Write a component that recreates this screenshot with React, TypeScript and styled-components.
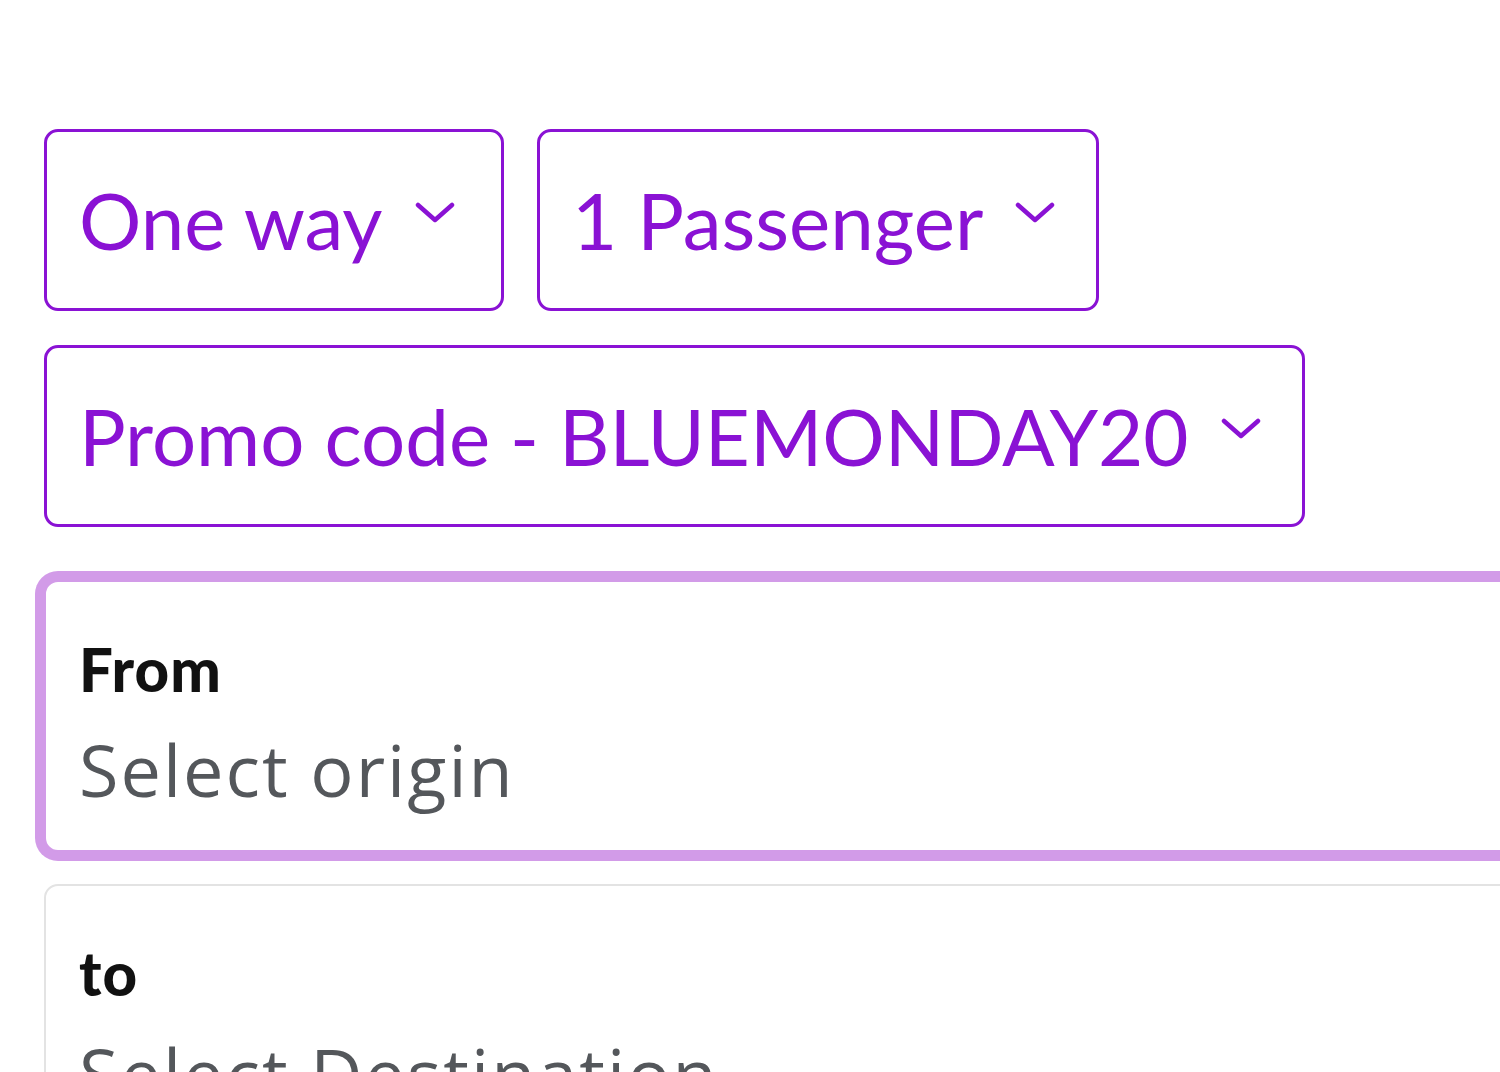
import React from "react";
import styled, { createGlobalStyle } from "styled-components";

const GlobalStyle = createGlobalStyle`
  html, body {
    margin: 0;
    padding: 0;
    background: #ffffff;
    overflow: hidden;
  }
  body {
    font-family: Lato, "Noto Sans", sans-serif;
  }
`;

const PURPLE = "#8a12d4";

const Page = styled.div`
  display: flex;
  flex-direction: column;
  padding: 129px 0 0 44px;
  width: 1700px;
`;

const Row = styled.div`
  display: flex;
  gap: 33px;
  margin-bottom: 34px;
`;

const SelectButton = styled.button<{ $minWidth?: number }>`
  display: flex;
  align-items: center;
  gap: 32px;
  height: 182px;
  min-width: ${(p) => (p.$minWidth ? `${p.$minWidth}px` : "auto")};
  box-sizing: border-box;
  padding: 0 41px 0 32px;
  background: #ffffff;
  border: 3px solid ${PURPLE};
  border-radius: 14px;
  color: ${PURPLE};
  font-family: Lato, "Noto Sans", sans-serif;
  font-size: 78px;
  font-weight: 400;
  line-height: 1;
  cursor: pointer;
`;

const Chevron = styled.svg`
  width: 40px;
  height: 22px;
  flex: none;
  margin-top: -14px;
`;

const FieldCard = styled.div<{ $focused?: boolean }>`
  box-sizing: border-box;
  width: 1600px;
  height: 272px;
  padding: 51px 0 0 33px;
  border: 2px solid ${(p) => (p.$focused ? "#d29be8" : "#e3e3e3")};
  border-radius: 14px;
  box-shadow: ${(p) => (p.$focused ? "0 0 0 9px #d29be8" : "none")};
  background: #ffffff;
  margin-top: ${(p) => (p.$focused ? "19px" : "32px")};
`;

const Label = styled.div`
  font-family: Lato, "Noto Sans", sans-serif;
  font-weight: 900;
  font-size: 60px;
  letter-spacing: 1px;
  line-height: 1.2;
  color: #111111;
`;

const Placeholder = styled.div`
  font-family: "Open Sans", Lato, sans-serif;
  font-weight: 400;
  font-size: 72px;
  letter-spacing: 2px;
  line-height: 1.2;
  color: #54575b;
  margin-top: 21px;
`;

const ChevronIcon = () => (
  <Chevron viewBox="0 0 40 22" fill="none">
    <path
      d="M3 3 L20 18 L37 3"
      stroke={PURPLE}
      strokeWidth="4.5"
      strokeLinecap="round"
      strokeLinejoin="round"
    />
  </Chevron>
);

export default function App() {
  return (
    <>
      <GlobalStyle />
      <Page>
        <Row>
          <SelectButton $minWidth={460}>
            One way
            <ChevronIcon />
          </SelectButton>
          <SelectButton>
            1 Passenger
            <ChevronIcon />
          </SelectButton>
        </Row>
        <Row>
          <SelectButton>
            Promo code - BLUEMONDAY20
            <ChevronIcon />
          </SelectButton>
        </Row>
        <FieldCard $focused>
          <Label>From</Label>
          <Placeholder>Select origin</Placeholder>
        </FieldCard>
        <FieldCard>
          <Label>to</Label>
          <Placeholder>Select Destination</Placeholder>
        </FieldCard>
      </Page>
    </>
  );
}
